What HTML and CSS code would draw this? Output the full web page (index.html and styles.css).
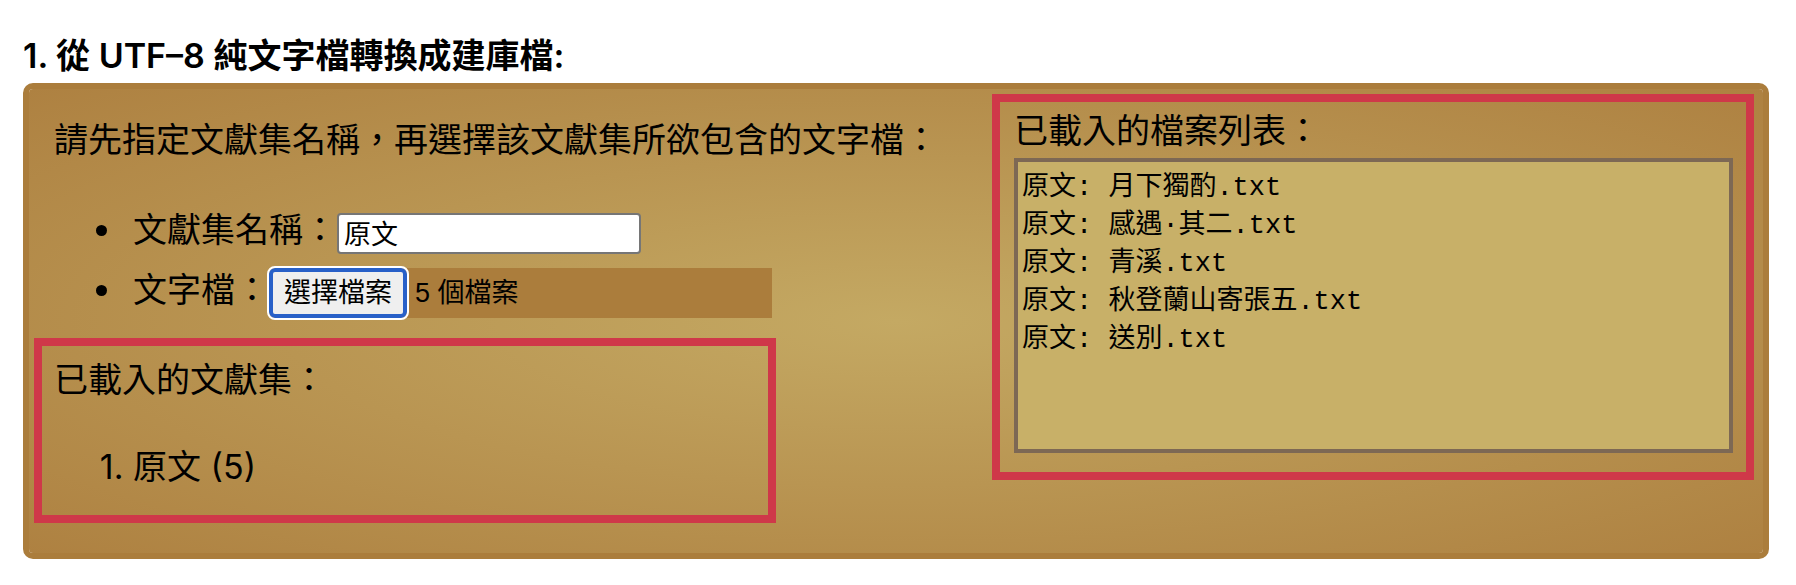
FILE: index.html
```html
<!DOCTYPE html>
<html lang="zh-Hant">
<head>
<meta charset="utf-8">
<meta name="viewport" content="width=device-width, initial-scale=1">
<title>文字檔轉換成建庫檔</title>
<link rel="stylesheet" href="styles.css">
</head>
<body>
<main>
  <h2 class="title">1. 從 UTF–8 純文字檔轉換成建庫檔:</h2>
  <form class="panel">
    <div class="source">
      <p class="intro">請先指定文獻集名稱，再選擇該文獻集所欲包含的文字檔：</p>
      <ul class="fields">
        <li><div class="field"><label for="corpus">文獻集名稱：</label><input class="name" id="corpus" type="text" value="原文"></div></li>
        <li><div class="field"><label for="pick">文字檔：</label><div class="files"><button class="pick" id="pick" type="button">選擇檔案</button><span>5 個檔案</span></div></div></li>
      </ul>
      <section class="marked corpora">
        <p class="caption">已載入的文獻集：</p>
        <ol class="loaded">
          <li>原文 (5)</li>
        </ol>
      </section>
    </div>
    <section class="marked listing">
      <label class="caption" for="list">已載入的檔案列表：</label>
      <textarea class="list" id="list" readonly>原文: 月下獨酌.txt
原文: 感遇·其二.txt
原文: 青溪.txt
原文: 秋登蘭山寄張五.txt
原文: 送別.txt</textarea>
    </section>
  </form>
</main>
</body>
</html>
```
FILE: styles.css
```css
* { box-sizing: border-box; }

body {
  margin: 0;
  padding: 32px 27px 26px 23px;
  background: #fff;
  color: #000;
  font: 34px/48px Inter, "Noto Sans CJK TC", sans-serif;
}

.title {
  margin: 0 0 4px;
  font-size: 34px;
  line-height: 47px;
  font-weight: 600;
}

.panel {
  display: grid;
  grid-template-columns: minmax(0, 958fr) minmax(0, 762fr);
  align-items: start;
  padding: 5px 9px 30px 5px;
  border: 6px solid #ab7d3c;
  border-radius: 10px;
  background: radial-gradient(ellipse farthest-corner at center, #c4a963, #ae8141) padding-box;
}

.source { padding-top: 22px; }

.intro {
  margin: 0 0 42px;
  padding-left: 20px;
}

.fields {
  display: grid;
  gap: 12px;
  width: 77%;
  margin: 0 0 20px;
  padding-left: 91px;
}

.fields li { padding-left: 8px; }

.field {
  display: flex;
  align-items: baseline;
}

.field label { white-space: nowrap; }

.name {
  align-self: flex-end;
  width: 304px;
  height: 41px;
  padding: 0 5px 3px;
  border: 2px solid #767676;
  border-radius: 4px;
  background: #fff;
  font: 27px/34px "Liberation Sans", "Noto Sans CJK TC", sans-serif;
}

.files {
  display: flex;
  flex: 1;
  align-items: center;
  gap: 8px;
  background: #ab7d3c;
  font: 27px/38px "Liberation Sans", "Noto Sans CJK TC", sans-serif;
}

.pick {
  height: 50px;
  padding: 0 11px;
  border: 4px solid #2860c8;
  border-radius: 6px;
  outline: 2px solid #fff;
  background: #efefef;
  color: #000;
  font: inherit;
}

.marked { border: 8px solid #cf3849; }

.corpora {
  width: 77.5%;
  padding: 10px 12px 24px;
}

.caption {
  display: block;
  margin: 0;
}

.loaded {
  margin: 39px 0 0;
  padding-left: 79px;
}

.loaded li::marker { font-variant-numeric: normal; }

.listing { padding: 5px 13px 19px 14px; }

.list {
  display: block;
  width: 100%;
  height: 295px;
  margin-top: 3px;
  padding: 7px 4px 0;
  border: 4px solid #7d6854;
  border-radius: 0;
  outline: 0;
  resize: none;
  background: #c8b068;
  color: #000;
  font: 27px/38px "Liberation Mono", "Noto Sans CJK TC", monospace;
}
```
